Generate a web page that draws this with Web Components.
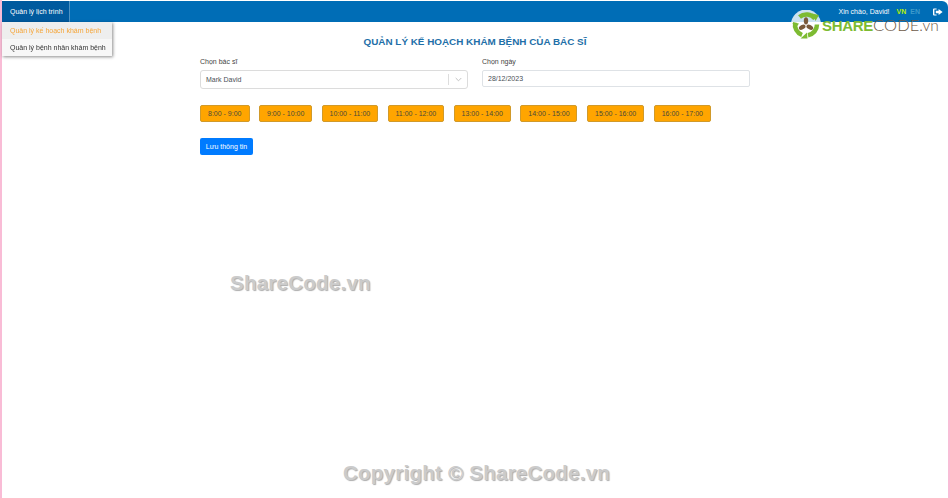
<!DOCTYPE html>
<html><head><meta charset="utf-8">
<style>
html,body{margin:0;height:100%;background:#f9bcd6;overflow:hidden}
body{font-family:"Liberation Sans",Arial,sans-serif}
</style></head><body>
<schedule-app></schedule-app>
<template id="t-app"><style>
:host{display:flex;flex-direction:column;box-sizing:border-box;height:498px;margin:0 2px;padding-top:1px;background:#fff;position:relative;filter:blur(.3px)}
main{display:block;width:550px;margin-left:198px}
</style>
<top-bar></top-bar>
<main><page-title>QUẢN LÝ KẾ HOẠCH KHÁM BỆNH CỦA BÁC SĨ</page-title>
<schedule-form></schedule-form></main>
<water-mark style="left:228px;top:271px;font-size:20.5px">ShareCode.vn</water-mark>
<water-mark style="left:341px;top:461px;font-size:20.5px">Copyright © ShareCode.vn</water-mark>
</template>
<template id="t-bar"><style>
:host{display:flex;height:21px;background:#006db6;color:#fff;font-size:7px;position:relative;border-radius:3px 6px 0 0;align-items:stretch;justify-content:space-between}
.tab{display:flex;align-items:center;padding:0 6px 0 8px;background:#005a9e;border-right:1px solid #4e93c4}
.right{display:flex;align-items:center;gap:7px;padding-right:5px}
.vn{color:#b6f000;font-weight:bold}.en{color:#3d9bcb;font-weight:bold;margin-left:-3px}
svg{display:block;margin-left:6px}
.menu{position:absolute;left:0;top:21px;width:110px;background:#f7f7f7;box-shadow:1px 1px 3px rgba(0,0,0,.45);color:#333;z-index:3}
.menu div{height:17px;line-height:17px;padding-left:8px;white-space:nowrap}
.menu .on{color:#f5a63a;background:#eee}
</style>
<div class="tab">Quản lý lịch trình</div>
<div class="right"><span>Xin chào, David!</span><span class="vn">VN</span><span class="en">EN</span>
<svg width="10" height="8" viewBox="0 0 10 8"><path fill="#fff" d="M0 1.5Q0 .5 1 .5H3.6V1.6H1.4V6.4H3.6V7.5H1Q0 7.5 0 6.5ZM5.6 1 9.6 4 5.6 7V5.2H2.8V2.8H5.6Z"/></svg></div>
<div class="menu"><div class="on">Quản lý kế hoạch khám bệnh</div><div>Quản lý bệnh nhân khám bệnh</div></div>
<share-logo></share-logo>
</template>
<template id="t-logo"><style>
:host{position:absolute;left:788px;top:9px;display:flex;align-items:center;height:30px;z-index:4}
span{font-size:16.5px;line-height:30px;white-space:nowrap;color:#6d5a48;margin-left:-1px;margin-top:1px}
b{color:#7dbb32;font-weight:bold;font-size:15px;letter-spacing:-.3px}
i{font-style:normal;font-family:"Lato","Open Sans",sans-serif;font-weight:300;letter-spacing:.05px}
.vn{font-size:15.5px;letter-spacing:0}
</style>
<svg width="33" height="30" viewBox="0 0 33 30">
<circle cx="16" cy="14.5" r="15" fill="#fff" opacity=".8"/>
<path fill="none" stroke="#7dbb32" stroke-width="4.5" d="M9.5 7A11 11 0 0 1 25 8.5M27 14.5A11 11 0 0 1 18 25.3M12 25A11 11 0 0 1 5.2 12.5"/>
<path fill="#7dbb32" d="M2.5 13 5 19 9 13.5ZM22 3.5 29 5 25.5 11ZM10.5 28.5 17 22.5 17.5 28.5Z"/>
<g fill="#7a5a3a"><ellipse cx="16" cy="10.8" rx="2.2" ry="3.6"/><ellipse cx="12.2" cy="17.2" rx="2.2" ry="3.6" transform="rotate(60 12.2 17.2)"/><ellipse cx="19.8" cy="17.2" rx="2.2" ry="3.6" transform="rotate(-60 19.8 17.2)"/></g>
</svg>
<span><b>SHARE</b><i>CODE</i><i class="vn">.vn</i></span>
</template>
<template id="t-title"><style>
:host{display:block;text-align:center;color:#1e6fa8;font-size:9.9px;font-weight:bold;margin-top:14px;line-height:12px}
</style><slot></slot></template>
<template id="t-form"><style>
:host{display:block;margin-top:9px;font-size:7px;color:#495057}
.row{display:grid;grid-template-columns:268px 268px;column-gap:14px}
label{display:block;line-height:9px;color:#444;margin-bottom:4px}
.sel{height:19px;box-sizing:border-box;border:1px solid #dcdcdc;border-radius:3px;display:flex;align-items:center;padding-left:5px;justify-content:space-between}
.arrow{display:flex;align-items:center;height:11px;border-left:1px solid #ddd;padding:0 5px 0 6px}
.date{height:17px;box-sizing:border-box;border:1px solid #dee2e6;border-radius:2px;display:flex;align-items:center;padding-left:5px}
.slots{display:flex;gap:9.7px;margin-top:16px}
.go{margin-top:16px}
</style>
<div class="row">
<div><label>Chọn bác sĩ</label><div class="sel"><span>Mark David</span><span class="arrow"><svg width="7" height="5" viewBox="0 0 7 5"><path d="M.7 1 3.5 3.8 6.3 1" fill="none" stroke="#bbb" stroke-width=".9"/></svg></span></div></div>
<div><label>Chọn ngày</label><div class="date">28/12/2023</div></div>
</div>
<div class="slots">
<slot-btn style="width:49.5px">8:00 - 9:00</slot-btn><slot-btn style="width:53px">9:00 - 10:00</slot-btn><slot-btn style="width:56px">10:00 - 11:00</slot-btn><slot-btn style="width:56.5px">11:00 - 12:00</slot-btn><slot-btn style="width:57px">13:00 - 14:00</slot-btn><slot-btn style="width:57px">14:00 - 15:00</slot-btn><slot-btn style="width:57px">15:00 - 16:00</slot-btn><slot-btn style="width:57px">16:00 - 17:00</slot-btn>
</div>
<div class="go"><save-btn>Lưu thông tin</save-btn></div>
</template>
<template id="t-slot"><style>
:host{display:flex;align-items:center;justify-content:center;box-sizing:border-box;height:17px;background:#ffa500;border:1px solid #d19a2a;border-radius:2px;color:#4a4a3a;font-size:7px;white-space:nowrap}
</style><slot></slot></template>
<template id="t-save"><style>
:host{display:inline-flex;align-items:center;justify-content:center;box-sizing:border-box;width:53px;height:17px;background:#007bff;border-radius:2px;color:#fff;font-size:7px}
</style><slot></slot></template>
<template id="t-mark"><style>
:host{position:absolute;color:#cbcbcb;font-weight:bold;letter-spacing:.25px;line-height:24px;white-space:nowrap;text-shadow:1px 1px 1px #adadad}
</style><slot></slot></template>
<script>
const reg=(n,t)=>customElements.define(n,class extends HTMLElement{constructor(){super();this.attachShadow({mode:'open'}).appendChild(document.getElementById(t).content.cloneNode(true))}});
reg('schedule-app','t-app');reg('top-bar','t-bar');reg('share-logo','t-logo');reg('page-title','t-title');reg('schedule-form','t-form');reg('slot-btn','t-slot');reg('save-btn','t-save');reg('water-mark','t-mark');
</script>
</body></html>
